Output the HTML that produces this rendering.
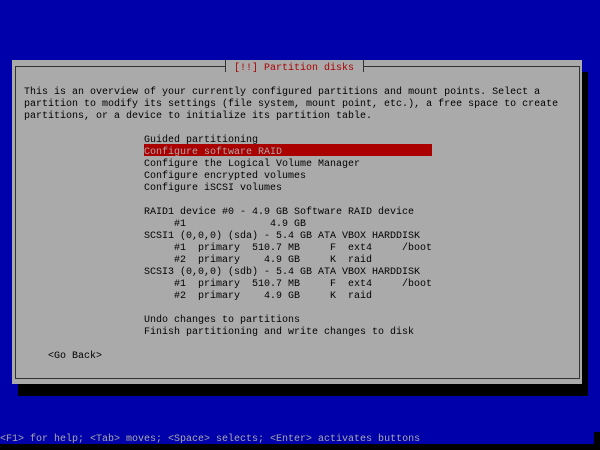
<!DOCTYPE html>
<html><head><meta charset="utf-8"><style>
html,body{margin:0;padding:0;}
body{width:600px;height:450px;background:#0000aa;position:relative;overflow:hidden;font-family:"Liberation Mono","DejaVu Sans Mono",monospace;font-size:10px;}
.a{position:absolute;}
pre{margin:0;font:inherit;line-height:12px;white-space:pre;color:#000;}
</style></head><body>
<div class="a" style="left:18px;top:72px;width:570px;height:324px;background:#000"></div>
<div class="a" style="left:12px;top:60px;width:570px;height:324px;background:#aaaaaa"></div>
<div class="a" style="left:15px;top:66px;border:1px solid #333;box-sizing:border-box;width:565px;height:313px"></div>
<div class="a" style="left:225px;top:60px;width:139px;height:12px;background:#aaaaaa"></div>
<div class="a" style="left:225px;top:60px;width:1px;height:12px;background:#333"></div>
<div class="a" style="left:363px;top:60px;width:1px;height:12px;background:#333"></div>
<div class="a" style="left:218px;top:66px;width:8px;height:1px;background:#333"></div>
<div class="a" style="left:363px;top:66px;width:8px;height:1px;background:#333"></div>
<pre class="a" style="left:234px;top:63px;color:#aa0000">[!!] Partition disks</pre>
<div class="a" style="left:144px;top:144px;width:288px;height:12px;background:#aa0000"></div>
<pre class="a" style="left:24px;top:87px">This is an overview of your currently configured partitions and mount points. Select a
partition to modify its settings (file system, mount point, etc.), a free space to create
partitions, or a device to initialize its partition table.</pre>
<pre class="a" style="left:144px;top:135px">Guided partitioning
<span style="color:#aaaaaa">Configure software RAID</span>
Configure the Logical Volume Manager
Configure encrypted volumes
Configure iSCSI volumes

RAID1 device #0 - 4.9 GB Software RAID device
     #1              4.9 GB
SCSI1 (0,0,0) (sda) - 5.4 GB ATA VBOX HARDDISK
     #1  primary  510.7 MB     F  ext4     /boot
     #2  primary    4.9 GB     K  raid
SCSI3 (0,0,0) (sdb) - 5.4 GB ATA VBOX HARDDISK
     #1  primary  510.7 MB     F  ext4     /boot
     #2  primary    4.9 GB     K  raid

Undo changes to partitions
Finish partitioning and write changes to disk</pre>
<pre class="a" style="left:48px;top:351px">&lt;Go Back&gt;</pre>
<pre class="a" style="left:0;top:434px;color:#aaaaaa">&lt;F1&gt; for help; &lt;Tab&gt; moves; &lt;Space&gt; selects; &lt;Enter&gt; activates buttons</pre>
<div class="a" style="left:594px;top:432px;width:6px;height:18px;background:#000"></div>
<div class="a" style="left:0;top:444px;width:600px;height:6px;background:#000"></div>
</body></html>
